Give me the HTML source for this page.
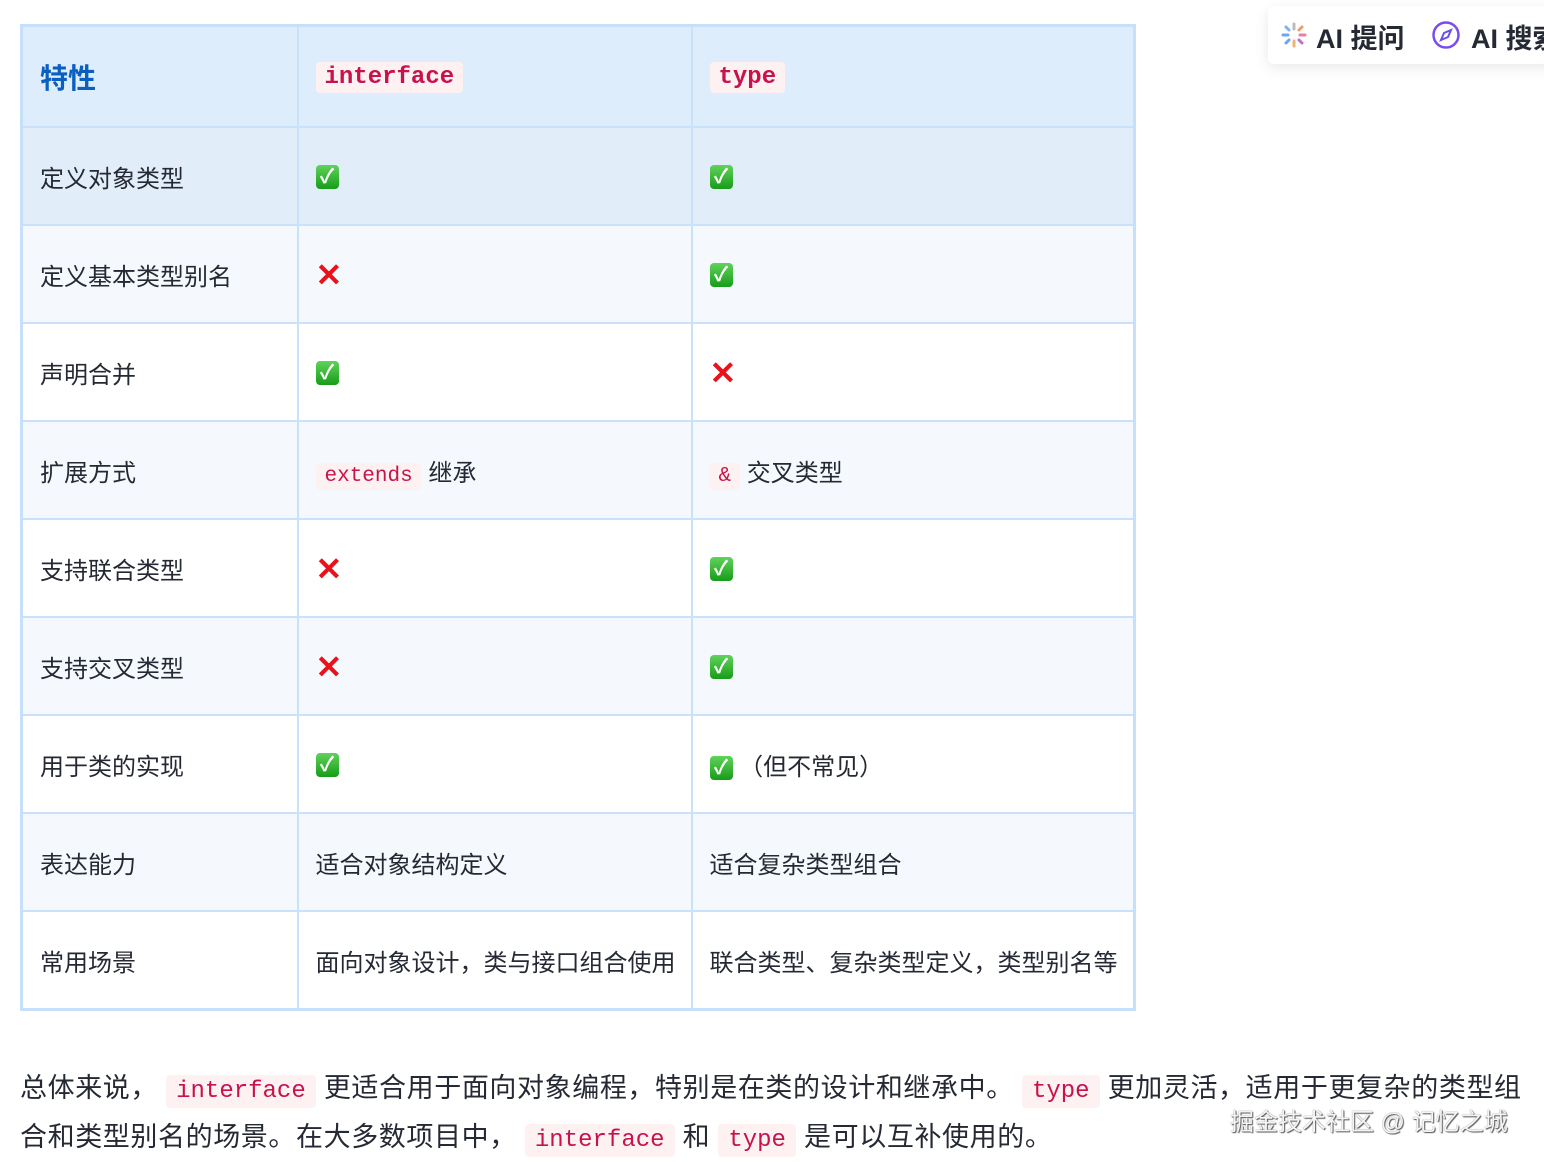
<!DOCTYPE html>
<html><head><meta charset="utf-8">
<style>
html,body{margin:0;padding:0;background:#fff;width:1544px;height:1162px;overflow:hidden;position:relative;font-family:"Liberation Sans","Noto Sans CJK SC",sans-serif;color:#252933}
table{position:absolute;left:20px;top:24px;border-collapse:collapse;border:3px solid #c6dffa;table-layout:fixed;width:1116px}
td,th{border:2px solid #c9e1fb;padding:0 0 0 17px;text-align:left;font-size:24px;font-weight:normal;height:96px;color:#252933;vertical-align:middle}
tr.h th{background:#deedfc;height:99px}
tr.h th:first-child{color:#0a5fc1;font-size:28px;font-weight:bold}
tr.a td{background:#f5f9fe}
tr.b td{background:#fff}
tr.s td{background:#e1eef9}
code{font-family:"Liberation Mono","DejaVu Sans Mono",monospace;color:#c7124f;background:#fdf1f2;border-radius:4px;padding:2px 9px}
th code{font-weight:bold;font-size:24px}
td code{font-size:21px}
.ck{display:inline-block;width:23px;height:24px;background:linear-gradient(#5fd35a,#179c19);border-radius:4px;color:#fff;font-size:20px;line-height:24px;text-align:center;font-weight:bold;vertical-align:middle}
.x{display:inline-block;color:#e8121b;font-size:32px;font-weight:bold;line-height:24px;vertical-align:middle}
.p{position:absolute;left:20px;font-size:27px;color:#252933;white-space:nowrap;letter-spacing:0.6px}
.p code{font-size:24px;padding:3px 10px;letter-spacing:0}
.wm{position:absolute;left:1230px;top:1102px;font-size:24px;color:#f4f4f4;text-shadow:1px 1px 1px #555,0 0 1px #666;white-space:nowrap}
.ai{position:absolute;left:1268px;top:6px;width:300px;height:58px;background:#fff;border-radius:6px;box-shadow:0 4px 14px rgba(0,0,0,.09);font-size:27px;font-weight:bold;color:#252933}
</style></head><body>
<table>
<colgroup><col style="width:276px"><col style="width:394px"><col></colgroup>
<tr class="h"><th>特性</th><th><code>interface</code></th><th><code>type</code></th></tr>
<tr class="s"><td>定义对象类型</td><td><span class="ck">✓</span></td><td><span class="ck">✓</span></td></tr>
<tr class="a"><td>定义基本类型别名</td><td><span class="x">✕</span></td><td><span class="ck">✓</span></td></tr>
<tr class="b"><td>声明合并</td><td><span class="ck">✓</span></td><td><span class="x">✕</span></td></tr>
<tr class="a"><td>扩展方式</td><td><code>extends</code> 继承</td><td><code>&amp;</code> 交叉类型</td></tr>
<tr class="b"><td>支持联合类型</td><td><span class="x">✕</span></td><td><span class="ck">✓</span></td></tr>
<tr class="a"><td>支持交叉类型</td><td><span class="x">✕</span></td><td><span class="ck">✓</span></td></tr>
<tr class="b"><td>用于类的实现</td><td><span class="ck">✓</span></td><td><span class="ck">✓</span> （但不常见）</td></tr>
<tr class="a"><td>表达能力</td><td>适合对象结构定义</td><td>适合复杂类型组合</td></tr>
<tr class="b"><td>常用场景</td><td>面向对象设计，类与接口组合使用</td><td>联合类型、复杂类型定义，类型别名等</td></tr>
</table>
<div class="p" style="top:1066px">总体来说， <code>interface</code> 更适合用于面向对象编程，特别是在类的设计和继承中。 <code>type</code> 更加灵活，适用于更复杂的类型组</div>
<div class="p" style="top:1115px">合和类型别名的场景。在大多数项目中， <code>interface</code> 和 <code>type</code> 是可以互补使用的。</div>
<div class="wm">掘金技术社区 @ 记忆之城</div>
<div class="ai">
<svg style="position:absolute;left:12px;top:15px" width="28" height="28" viewBox="0 0 28 28" stroke-width="3" stroke-linecap="round">
<line x1="14" y1="3" x2="14" y2="8" stroke="#bbb"/><line x1="14" y1="20" x2="14" y2="25" stroke="#f2b07a"/>
<line x1="3" y1="14" x2="8" y2="14" stroke="#6aa8f5"/><line x1="20" y1="14" x2="25" y2="14" stroke="#e97fa6"/>
<line x1="6" y1="6" x2="9" y2="9" stroke="#7ab3f7"/><line x1="19" y1="19" x2="22" y2="22" stroke="#c56bd6"/>
<line x1="22" y1="6" x2="19" y2="9" stroke="#f39b6c"/><line x1="6" y1="22" x2="9" y2="19" stroke="#6ea4f0"/>
</svg>
<span style="position:absolute;left:48px;top:11px">AI 提问</span>
<svg style="position:absolute;left:163px;top:14px" width="30" height="30" viewBox="0 0 30 30"><circle cx="15" cy="15" r="12.5" fill="none" stroke="#7a4cf0" stroke-width="2.5"/><path d="M20 10 L13 13 L10 20 L17 17 Z" fill="none" stroke="#6c4fe8" stroke-width="2"/></svg>
<span style="position:absolute;left:203px;top:11px">AI 搜索</span>
</div>
</body></html>
